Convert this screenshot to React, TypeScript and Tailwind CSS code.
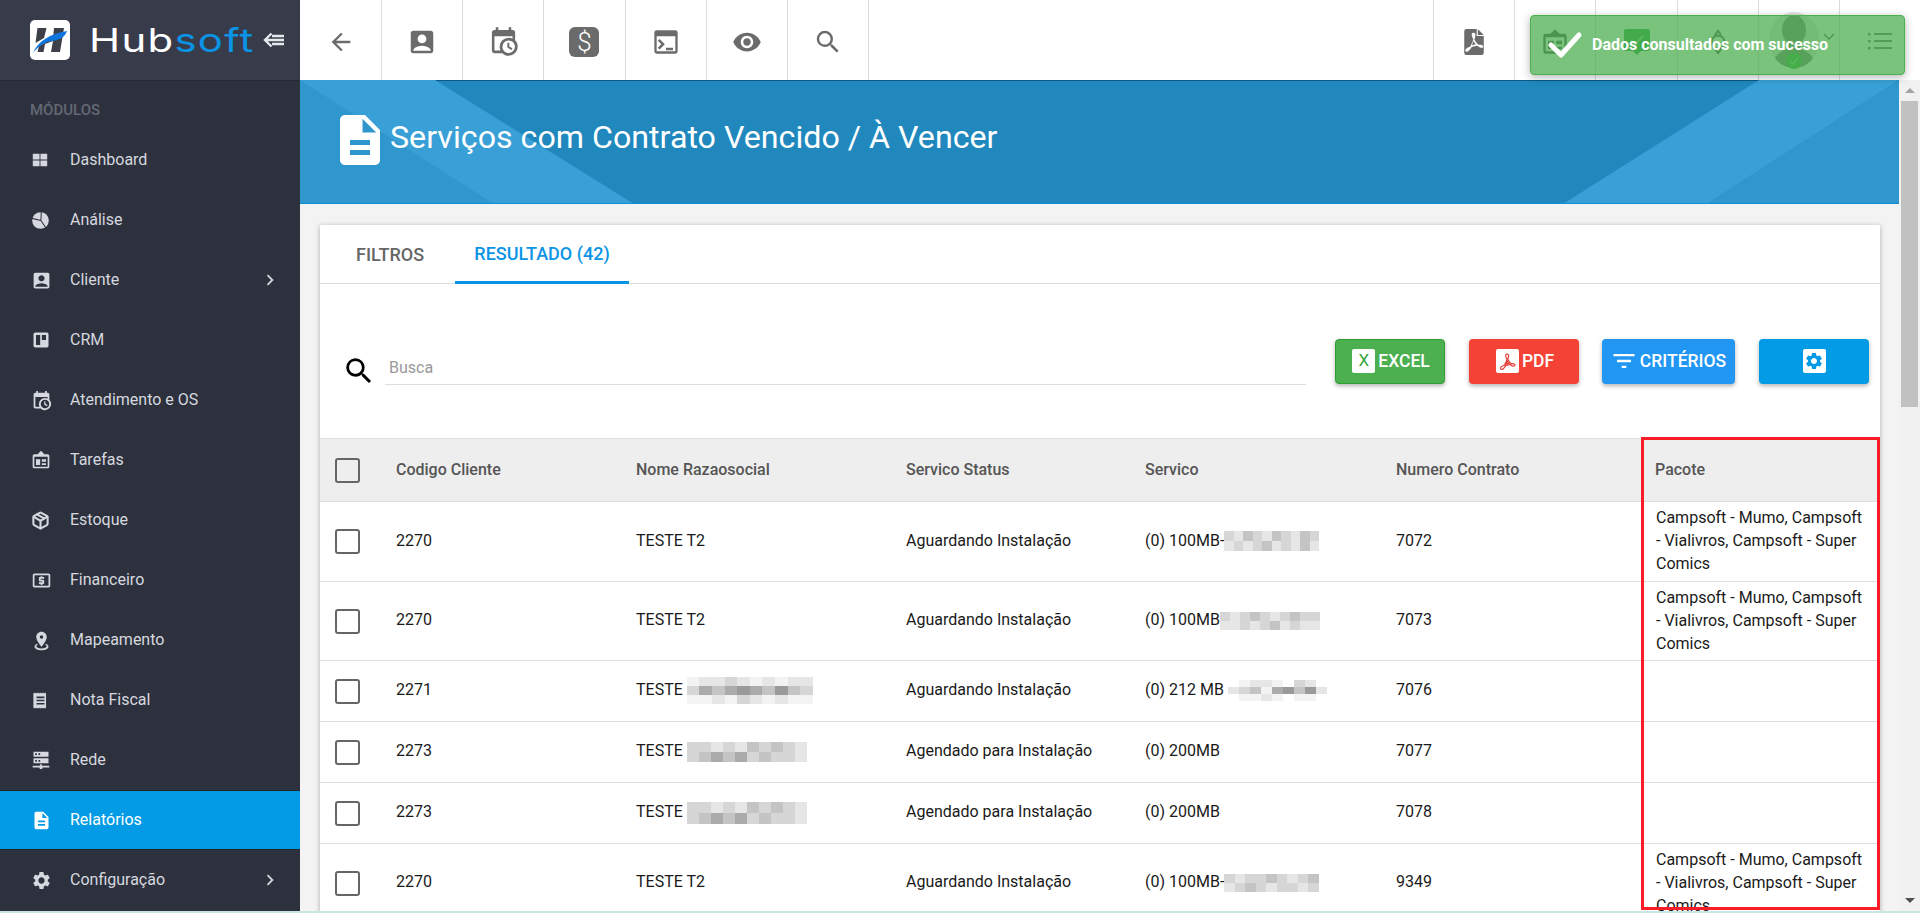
import React from "react";
import {
  MdArrowBack, MdAccountBox, MdVisibility, MdSearch, MdChevronRight,
  MdDescription, MdSettings, MdFilterList, MdLocalAtm,
} from "react-icons/md";
import { LuPackage } from "react-icons/lu";

const CAL = "M15,13H16.5V15.82L18.94,17.23L18.19,18.53L15,16.69V13M19,8H5V19H9.67C9.24,18.09 9,17.07 9,16A7,7 0 0,1 16,9C17.07,9 18.09,9.24 19,9.67V8M5,21C3.89,21 3,20.1 3,19V5C3,3.89 3.89,3 5,3H6V1H8V3H16V1H18V3H19A2,2 0 0,1 21,5V11.1C22.24,12.36 23,14.09 23,16A7,7 0 0,1 16,23C14.09,23 12.36,22.24 11.1,21H5M16,11.15A4.85,4.85 0 0,0 11.15,16C11.15,18.68 13.32,20.85 16,20.85A4.85,4.85 0 0,0 20.85,16C20.85,13.32 18.68,11.15 16,11.15Z";
const PIN = "M12,2C15.31,2 18,4.66 18,7.95C18,12.41 12,19 12,19C12,19 6,12.41 6,7.95C6,4.66 8.69,2 12,2M12,6A2,2 0 0,0 10,8A2,2 0 0,0 12,10A2,2 0 0,0 14,8A2,2 0 0,0 12,6M20,19C20,21.21 16.42,23 12,23C7.58,23 4,21.21 4,19C4,17.71 5.22,16.56 7.11,15.83L7.75,16.74C6.67,17.19 6,17.81 6,18.5C6,19.88 8.69,21 12,21C15.31,21 18,19.88 18,18.5C18,17.81 17.33,17.19 16.25,16.74L16.89,15.83C18.78,16.56 20,17.71 20,19Z";
const ACROBAT = "M11.3 3.5c-.9 0-1.4.7-1.4 1.6 0 1.3.7 3 1.5 4.6-.7 2.1-1.7 4.5-2.8 6.4-1.7.7-4.6 1.9-4.6 3.7 0 .8.6 1.3 1.4 1.3 1.6 0 3.2-2.1 4.5-4.4 1.7-.6 3.6-1.1 5.2-1.3 1.2 1 2.7 2 4 2 .9 0 1.5-.5 1.5-1.3 0-1.5-2.4-1.8-4.6-1.6-1.4-1.3-2.7-3-3.6-4.8.5-1.6.9-3.3.9-4.5 0-.9-.5-1.7-1.5-1.7zm.1 7.6c.6 1.1 1.4 2.1 2.3 3-1.2.2-2.4.5-3.6.9.5-1.3 1-2.6 1.3-3.9z";

const Ic = ({ d, size = 20, className = "" }: { d: string; size?: number; className?: string }) => (
  <svg viewBox="0 0 24 24" width={size} height={size} className={className} fill="currentColor"><path fillRule="evenodd" d={d} /></svg>
);
const Win = ({ size = 20 }: { size?: number }) => (
  <svg viewBox="0 0 20 20" width={size} height={size} fill="currentColor"><path d="M2 3h7.500v6.500H2zM10.500 3H18v6.500h-7.500zM2 10.500h7.500V17H2zM10.500 10.500H18V17h-7.500z" /></svg>
);
const Pie = ({ size = 20 }: { size?: number }) => (
  <svg viewBox="0 0 24 24" width={size} height={size}>
    <circle cx="12" cy="12" r="10.500" fill="currentColor" />
    <path d="M12.500 12L13 0M12.500 12L0 9M12.500 12L20 23" stroke="#2d313e" strokeWidth="1.300" fill="none" />
  </svg>
);
const Trello = ({ size = 20 }: { size?: number }) => (
  <svg viewBox="0 0 24 24" width={size} height={size} fill="currentColor"><path fillRule="evenodd" d="M5 3h14a2 2 0 0 1 2 2v14a2 2 0 0 1-2 2H5a2 2 0 0 1-2-2V5a2 2 0 0 1 2-2zm1 3v12h5V6H6zm7 0v6h5V6h-5z" /></svg>
);
const Tarefas = ({ size = 20, className = "" }: { size?: number; className?: string }) => (
  <svg viewBox="0 0 24 24" width={size} height={size} className={className} fill="currentColor"><path fillRule="evenodd" d="M12 1l4 4h4a2 2 0 0 1 2 2v13a2 2 0 0 1-2 2H4a2 2 0 0 1-2-2V7a2 2 0 0 1 2-2h4l4-4zM4 8v12h16V8H4zm2 3h5v7H6v-7zm7 0h5v3h-5v-3zm0 5h5v2h-5v-2z" /></svg>
);
const Receipt = ({ size = 20 }: { size?: number }) => (
  <svg viewBox="0 0 24 24" width={size} height={size} fill="currentColor"><path fillRule="evenodd" d="M4 2l1 1 1-1 1 1 1-1 1 1 1-1 1 1 1-1 1 1 1-1 1 1 1-1 1 1 1-1 1 1v18l-1 1-1-1-1 1-1-1-1 1-1-1-1 1-1-1-1 1-1-1-1 1-1-1-1 1-1-1-1 1-1-1V3l1-1zm3 5v2h10V7H7zm0 4v2h10v-2H7zm0 4v2h10v-2H7z" /></svg>
);
const Server = ({ size = 20 }: { size?: number }) => (
  <svg viewBox="0 0 24 24" width={size} height={size} fill="currentColor"><path fillRule="evenodd" d="M3 2h18v6H3V2zm2 2v2h2V4H5zm4 0v2h2V4H9zM3 10h18v6H3v-6zm2 2v2h2v-2H5zm4 0v2h2v-2H9zM11 17h2v2h9v2h-8a2 2 0 0 1-4 0H2v-2h9v-2z" /></svg>
);
const Console = ({ size = 24 }: { size?: number }) => (
  <svg viewBox="0 0 24 24" width={size} height={size} fill="currentColor"><path fillRule="evenodd" d="M4 2h16a2 2 0 0 1 2 2v16a2 2 0 0 1-2 2H4a2 2 0 0 1-2-2V4a2 2 0 0 1 2-2zm0 5v13h16V7H4zm2.500 2.500L11 14l-4.500 4.500L5 17l3-3-3-3 1.500-1.500zM12 17h6v2h-6v-2z" /></svg>
);
const CollapseArrow = () => (
  <svg viewBox="0 0 22 16" width="22" height="16" fill="none" stroke="#e4e7ec" strokeWidth="2.400"><path d="M8.500 1.500L2 8l6.500 6.500" /><path d="M2.500 8H21M9 4H21M9 12H21" /></svg>
);
const PdfFile = ({ size = 34 }: { size?: number }) => (
  <svg viewBox="0 0 24 24" width={size} height={size} fill="#6b6b6b"><path fillRule="evenodd" d="M5 0h9.500V6.500H21V22a2 2 0 0 1-2 2H5a2 2 0 0 1-2-2V2a2 2 0 0 1 2-2z" /><path d="M15.500 0L21 5.500h-5.500z" /><path fill="#fff" fillRule="evenodd" d={ACROBAT} /></svg>
);
const LogoMark = () => (
  <svg viewBox="0 0 40 40" width="40" height="40">
    <rect width="40" height="40" rx="5" fill="#fff" />
    <path d="M7.500 8h9l-2.500 10-8.500 5zM24 8h10l-4 24h-9l2-11-8 3-1.500 8h-6l1.500-6 14-7.500z" fill="#3d3f49" />
    <path d="M3 33C8 21 20 14 37 11c-2 6-7 9-15 10C14 22 8 27 3 33z" fill="#0f74dc" />
  </svg>
);

type Nav = { label: string; icon: React.ReactNode; chev?: boolean; active?: boolean };
const nav: Nav[] = [
  { label: "Dashboard", icon: <Win size={18} /> },
  { label: "Análise", icon: <Pie size={19} /> },
  { label: "Cliente", icon: <MdAccountBox size={21} />, chev: true },
  { label: "CRM", icon: <Trello size={20} /> },
  { label: "Atendimento e OS", icon: <Ic d={CAL} size={21} /> },
  { label: "Tarefas", icon: <Tarefas size={20} /> },
  { label: "Estoque", icon: <LuPackage size={19} strokeWidth={2.6} /> },
  { label: "Financeiro", icon: <MdLocalAtm size={21} /> },
  { label: "Mapeamento", icon: <Ic d={PIN} size={21} /> },
  { label: "Nota Fiscal", icon: <Receipt size={19} /> },
  { label: "Rede", icon: <Server size={20} /> },
  { label: "Relatórios", icon: <MdDescription size={21} />, active: true },
  { label: "Configuração", icon: <MdSettings size={21} />, chev: true },
];

function Sidebar() {
  return (
    <aside className="w-[300px] h-full shrink-0 flex flex-col bg-[#2d313e] overflow-hidden">
      <div className="h-[81px] shrink-0 flex items-center bg-[#383c4a] border-b border-[#262933] pl-[30px]">
        <LogoMark />
        <span className="ml-[19px] w-[126px] inline-block origin-left scale-x-[1.27] text-[33px] leading-none font-normal tracking-[1px] text-white" style={{ fontFamily: "Inter, sans-serif" }}>
          Hub<span className="text-[#0b94e6]">soft</span>
        </span>
        <span className="ml-[48px] flex"><CollapseArrow /></span>
      </div>
      <div className="h-[49px] shrink-0 flex items-center pl-[30px] pt-[9px] text-[15px] font-medium text-[#646874]">MÓDULOS</div>
      {nav.map((n) => (
        <div key={n.label} className={`h-[60px] shrink-0 flex items-center pl-[30px] text-[16px] ${n.active ? "bg-[#039be5] text-white border-y border-[#23252c]" : "text-[#d5d8de]"}`}>
          <span className={`w-[40px] flex items-center pl-[1px] ${n.active ? "text-white" : "text-[#d5d8de]"}`}>{n.icon}</span>
          <span className="flex-1">{n.label}</span>
          {n.chev && <MdChevronRight size={22} className="mr-[19px]" />}
        </div>
      ))}
    </aside>
  );
}

const Cell = ({ children, first }: { children?: React.ReactNode; first?: boolean }) => (
  <div className={`${first ? "w-[82px]" : "w-[81.2px]"} h-full shrink-0 flex items-center justify-center pt-[3px] text-[#6b6b6b] border-r border-[#dcdcdc]`}>{children}</div>
);

const Avatar = () => (
  <svg viewBox="0 0 50 60" width="50" height="60">
    <ellipse cx="25" cy="30" rx="25" ry="28" fill="#e2e2e2" />
    <ellipse cx="25" cy="20" rx="12" ry="15" fill="#777" />
    <path d="M18 32h14v7c5 2 10 5 12 9-5 7-12 10-19 10s-14-3-19-10c2-4 7-7 12-9z" fill="#777" />
    <circle cx="25" cy="51" r="8" fill="#37a93d" />
    <path d="M21 51l3 3 5-6" fill="none" stroke="#7fd183" strokeWidth="1.500" />
  </svg>
);

function TopBar() {
  return (
    <div className="h-[80px] shrink-0 flex items-stretch bg-white">
      <Cell first><MdArrowBack size={28} /></Cell>
      <Cell><MdAccountBox size={30} /></Cell>
      <Cell><Ic d={CAL} size={31} /></Cell>
      <Cell>
        <span className="w-[30px] h-[30px] rounded-[6px] bg-[#6b6b6b] text-white flex items-center justify-center text-[26px] leading-none font-light">$</span>
      </Cell>
      <Cell><Console size={28} /></Cell>
      <Cell><MdVisibility size={30} /></Cell>
      <Cell><MdSearch size={30} /></Cell>
      <div className="flex-1 border-r border-[#dcdcdc]" />
      <Cell><PdfFile size={26} /></Cell>
      <Cell><Tarefas size={28} className="text-[#4a4a4a]" /></Cell>
      <Cell>
        <svg viewBox="0 0 26 26" width="26" height="26"><path d="M2 0h22a2 2 0 0 1 2 2v18a2 2 0 0 1-2 2h-7l-4 4-4-4H2a2 2 0 0 1-2-2V2a2 2 0 0 1 2-2z" fill="#2f9e44" /><path d="M7 11l4 4 8-8" fill="none" stroke="#9fd4a5" strokeWidth="1.600" /></svg>
      </Cell>
      <Cell>
        <svg viewBox="0 0 16 26" width="16" height="26" fill="none" stroke="#4f4f4f" strokeWidth="2"><circle cx="8" cy="13" r="6.500" /><path d="M5 6l3-4 3 4M5 20l3 4 3-4" /></svg>
      </Cell>
      <div className="w-[81.2px] h-full shrink-0 flex items-center pl-[10px] border-r border-[#dcdcdc]">
        <Avatar />
        <svg viewBox="0 0 12 7" width="12" height="7" className="ml-[4px] -mt-[8px]" fill="none" stroke="#4f4f4f" strokeWidth="1.300"><path d="M1 1l5 5 5-5" /></svg>
      </div>
      <div className="w-[80px] shrink-0 h-full flex items-center justify-center pt-[1px]">
        <svg viewBox="0 0 24 18" width="24" height="18" fill="#666"><path d="M0 1h2.500v2.500H0zM6 1h18v2H6zM0 8h2.500v2.500H0zM6 8h18v2H6zM0 15h2.500v2.500H0zM6 15h18v2H6z" /></svg>
      </div>
    </div>
  );
}

function Banner() {
  return (
    <div className="relative h-[124px] shrink-0 flex items-center pl-[30px] pb-[3px] bg-[#2088bd] border-b border-[#0d92d6] overflow-hidden shadow-[inset_0_1px_0_#0b5a88]">
      <svg className="absolute inset-0" width="1599" height="124" viewBox="0 0 1599 124" preserveAspectRatio="none">
        <polygon points="0,0 135,0 334,124 0,124" fill="#38a0d6" />
        <polygon points="0,0 0,124 194,124" fill="#2f97cd" />
        <polygon points="1459,0 1599,0 1407,124 1263,124" fill="#38a0d6" />
        <polygon points="1599,0 1599,124 1407,124" fill="#2f97cd" />
      </svg>
      <MdDescription size={60} className="relative text-white" />
      <h1 className="relative -mt-[5px] text-[32.2px] font-normal text-white">Serviços com Contrato Vencido / À Vencer</h1>
    </div>
  );
}

const shades: Record<string, string> = { a: "#f3f3f3", b: "#e6e6e6", c: "#d6d6d6", d: "#c4c4c4", e: "#ababab", f: "#9a9a9a", g: "#ffffff", h: "#ececf0" };
function Mosaic({ rows, w, h }: { rows: string[]; w: number; h: number }) {
  return (
    <span className="inline-flex flex-col align-middle">
      {rows.map((r, i) => (
        <span key={i} className="flex">
          {r.split("").map((c, j) => (
            <span key={j} style={{ width: w, height: h, background: shades[c] }} />
          ))}
        </span>
      ))}
    </span>
  );
}

const ColW = ["w-[76px]", "w-[240px]", "w-[270px]", "w-[239px]", "w-[251px]", "w-[259px]"];
const PAC = "Campsoft - Mumo, Campsoft - Vialivros, Campsoft - Super Comics";
const m1 = ["cbcdcbcdcc", "bbcbcdbcbb"];
const m2 = ["cbdcbdcbdc", "bcbcdbcbdb"];
const m3 = ["abbcbababb", "cedefedfdc", "aabacbabaa"];
const m4 = ["gabbagcbg", "bcdaefdfb", "gaabagaag"];
const m5 = ["ccbcbdcdcbg", "cdedecdccbg"];
const m6 = ["cbccdcbcd", "bcdcbccbc"];

type Row = { id: string; name: React.ReactNode; st: string; sv: React.ReactNode; nc: string; p?: boolean; h: string };
const rows: Row[] = [
  { id: "2270", name: "TESTE T2", st: "Aguardando Instalação", sv: <>(0) 100MB-<Mosaic rows={m2} w={9.5} h={10} /></>, nc: "7072", p: true, h: "h-[80px]" },
  { id: "2270", name: "TESTE T2", st: "Aguardando Instalação", sv: <>(0) 100MB<Mosaic rows={m1} w={10} h={9} /></>, nc: "7073", p: true, h: "h-[79px]" },
  { id: "2271", name: <>TESTE <Mosaic rows={m3} w={12.6} h={9} /></>, st: "Aguardando Instalação", sv: <>(0) 212 MB <Mosaic rows={m4} w={11} h={7} /></>, nc: "7076", h: "h-[61px]" },
  { id: "2273", name: <>TESTE <Mosaic rows={m5} w={12} h={10} /></>, st: "Agendado para Instalação", sv: "(0) 200MB", nc: "7077", h: "h-[61px]" },
  { id: "2273", name: <>TESTE <Mosaic rows={m5} w={12} h={11} /></>, st: "Agendado para Instalação", sv: "(0) 200MB", nc: "7078", h: "h-[61px]" },
  { id: "2270", name: "TESTE T2", st: "Aguardando Instalação", sv: <>(0) 100MB-<Mosaic rows={m6} w={10.5} h={9} /></>, nc: "9349", p: true, h: "h-[79px]" },
];

const Check = () => <span className="block w-[25px] h-[25px] rounded-[3px] border-2 border-[#666]" />;

function Table() {
  const head = ["Codigo Cliente", "Nome Razaosocial", "Servico Status", "Servico", "Numero Contrato", "Pacote"];
  return (
    <div className="relative">
      <div className="flex h-[64px] items-center bg-[#eeeeee] border-y border-[#dddddd] text-[16px] font-medium text-[#555]">
        <div className="w-[76px] pl-[15px]"><Check /></div>
        {head.map((h, i) => <div key={h} className={i === 5 ? "flex-1" : ColW[i + 1]}>{h}</div>)}
      </div>
      {rows.map((r, i) => (
        <div key={i} className={`flex items-center pb-[2px] border-b border-[#e0e0e0] text-[16px] text-[#1a1a1a] ${r.h}`}>
          <div className="w-[76px] pl-[15px] mt-[2px]"><Check /></div>
          <div className={ColW[1]}>{r.id}</div>
          <div className={ColW[2]}>{r.name}</div>
          <div className={ColW[3]}>{r.st}</div>
          <div className={ColW[4]}>{r.sv}</div>
          <div className={ColW[5]}>{r.nc}</div>
          <div className="flex-1 pl-[1px] pr-[13px] leading-[23px]">{r.p ? PAC : ""}</div>
        </div>
      ))}
      <div className="absolute left-[1321px] top-[-1px] w-[239px] h-[473px] border-[3px] border-[#fa1c27] pointer-events-none" />
    </div>
  );
}

const Btn = ({ className, children }: { className: string; children: React.ReactNode }) => (
  <button className={`h-[45px] rounded-[4px] flex items-center justify-center gap-[3px] text-[17.5px] font-medium text-white uppercase shadow-[0_2px_4px_rgba(0,0,0,0.3)] ${className}`}>{children}</button>
);

function Card() {
  return (
    <div className="ml-[20px] mr-[19px] mt-[21px] bg-white shadow-[0_1px_5px_rgba(0,0,0,0.3)]">
      <div className="h-[59px] flex items-end pl-[16px] border-b border-[#dddddd] text-[18px] font-medium">
        <div className="w-[119px] h-full flex items-center pl-[20px] text-[#666]">FILTROS</div>
        <div className="w-[174px] h-full flex items-center justify-center text-[#0b94e6] border-b-[3px] border-[#0b94e6] -mb-px">RESULTADO (42)</div>
      </div>
      <div className="h-[154px] flex items-center pl-[22px] pr-[11px] pt-[12px]">
        <MdSearch size={34} className="text-black mt-[8px]" />
        <div className="ml-[9px] w-[921px] h-[33px] mt-[2px] flex items-center pl-[4px] border-b border-[#dddddd] text-[16px] text-[#999]">Busca</div>
        <div className="ml-auto flex gap-[24px] -mt-[12px]">
          <Btn className="w-[110px] pl-[2px] bg-[#4caf50] border border-[#2f9e33]">
            <span className="w-[23px] h-[24px] rounded-[2px] bg-white text-[#3aa83f] text-[17px] font-normal flex items-center justify-center">X</span>EXCEL
          </Btn>
          <Btn className="w-[110px] pl-[2px] bg-[#f44336]">
            <span className="w-[23px] h-[24px] rounded-[2px] bg-white flex items-center justify-center"><svg viewBox="0 0 24 24" width="21" height="21" fill="none" stroke="#e53935" strokeWidth="1.300"><path d={ACROBAT} /></svg></span>PDF
          </Btn>
          <Btn className="w-[133px] -ml-[1px] bg-[#2196f3]">
            <MdFilterList size={28} className="-mx-[1px]" />CRITÉRIOS
          </Btn>
          <Btn className="w-[110px] bg-[#039be5]">
            <span className="w-[23px] h-[24px] rounded-[2px] bg-white flex items-center justify-center text-[#039be5]"><MdSettings size={20} /></span>
          </Btn>
        </div>
      </div>
      <Table />
    </div>
  );
}

function Scrollbar() {
  return (
    <div className="w-[21px] h-full shrink-0 flex flex-col items-center bg-[#f1f1f1]">
      <div className="h-[21px] shrink-0 flex items-center justify-center"><div className="w-0 h-0 border-x-[5px] border-x-transparent border-b-[5px] border-b-[#a3a3a3]" /></div>
      <div className="w-[17px] h-[306px] bg-[#c1c1c1]" />
      <div className="flex-1" />
      <div className="h-[21px] shrink-0 flex items-center justify-center"><div className="w-0 h-0 border-x-[5px] border-x-transparent border-t-[5px] border-t-[#505050]" /></div>
    </div>
  );
}

export default function App() {
  return (
    <div className="relative w-[1920px] h-[913px] overflow-hidden flex flex-col bg-[#f3f3f3]" style={{ fontFamily: "Roboto, sans-serif" }}>
      <div className="flex-1 flex min-h-0">
        <Sidebar />
        <div className="flex-1 min-w-0 flex flex-col">
          <TopBar />
          <div className="flex-1 min-h-0 flex">
            <main className="flex-1 min-w-0 overflow-hidden">
              <Banner />
              <Card />
            </main>
            <Scrollbar />
          </div>
        </div>
      </div>
      <div className="h-[2px] shrink-0 bg-[#c9e6e4]" />
      <div className="absolute left-[1530px] top-[15px] w-[375px] h-[60px] rounded-[4px] bg-[#4caf50]/75 border border-[#4caf50] shadow-[0_2px_8px_rgba(0,0,0,0.3)] flex items-center pl-[17px]">
        <svg viewBox="0 0 34 26" width="34" height="26" fill="none" stroke="#fff" strokeWidth="5" strokeLinecap="round" strokeLinejoin="round"><path d="M3 13l10 10L31 3" /></svg>
        <span className="ml-[10px] text-[16px] font-bold text-white">Dados consultados com sucesso</span>
      </div>
    </div>
  );
}
